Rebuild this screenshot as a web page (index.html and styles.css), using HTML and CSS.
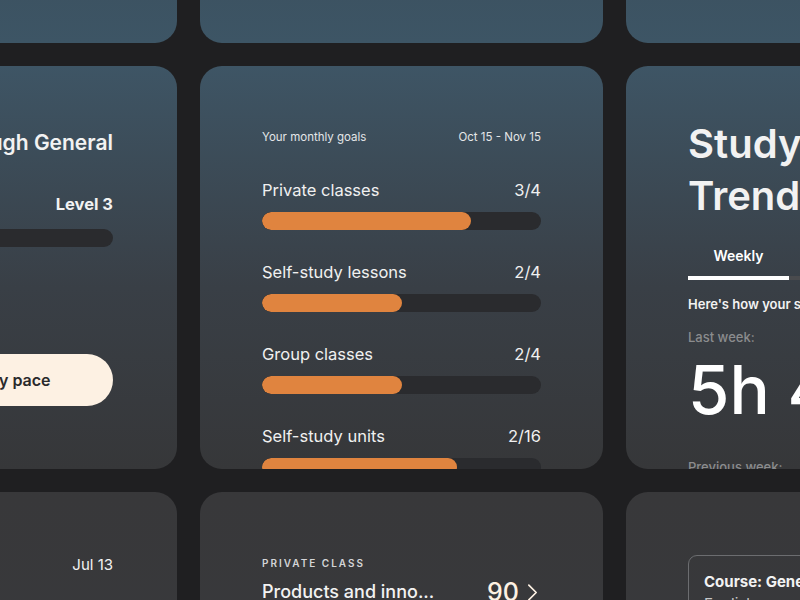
FILE: index.html
```html
<!DOCTYPE html>
<html lang="en">
<head>
<meta charset="utf-8">
<title>Dashboard</title>
<link rel="stylesheet" href="styles.css">
</head>
<body>
<div class="board">
  <div class="card card-top"></div>
  <div class="card card-top"></div>
  <div class="card card-top"></div>

  <div class="card card-mid course">
    <div class="course-title">Breakthrough General</div>
    <div class="level">Level 3</div>
    <div class="track"><div class="fill" style="width: 20%"></div></div>
    <button class="pace-btn">Customize my pace</button>
  </div>

  <div class="card card-mid goals">
    <div class="goals-head">
      <span>Your monthly goals</span>
      <span>Oct 15 - Nov 15</span>
    </div>
    <div class="goal">
      <div class="goal-row"><span>Private classes</span><span>3/4</span></div>
      <div class="track"><div class="fill" style="width: 75%"></div></div>
    </div>
    <div class="goal">
      <div class="goal-row"><span>Self-study lessons</span><span>2/4</span></div>
      <div class="track"><div class="fill" style="width: 50%"></div></div>
    </div>
    <div class="goal">
      <div class="goal-row"><span>Group classes</span><span>2/4</span></div>
      <div class="track"><div class="fill" style="width: 50%"></div></div>
    </div>
    <div class="goal">
      <div class="goal-row"><span>Self-study units</span><span>2/16</span></div>
      <div class="track"><div class="fill" style="width: 70%"></div></div>
    </div>
  </div>

  <div class="card card-mid trend">
    <h1 class="trend-title">Study<br>Trend</h1>
    <div class="tabs">
      <div class="tab active">Weekly</div>
      <div class="tab">Monthly</div>
    </div>
    <div class="trend-intro">Here's how your study time compares</div>
    <div class="muted">Last week:</div>
    <div class="big">5h 40m</div>
    <div class="divider"></div>
    <div class="muted prev">Previous week:</div>
  </div>

  <div class="card card-low dates">
    <div class="date">Jul 13</div>
  </div>

  <div class="card card-low private">
    <div class="eyebrow">PRIVATE CLASS</div>
    <div class="class-row">
      <span class="class-name">Products and inno...</span>
      <span class="class-score">90
        <svg class="chev" viewBox="0 0 12 20" width="11" height="19"><path d="M2 2 L10 10 L2 18" fill="none" stroke="currentColor" stroke-width="1.8" stroke-linecap="round" stroke-linejoin="round"/></svg>
      </span>
    </div>
  </div>

  <div class="card card-low coursebox-card">
    <div class="coursebox">
      <div class="coursebox-title">Course: General</div>
      <div class="coursebox-sub">English</div>
    </div>
  </div>
</div>
</body>
</html>
```

FILE: styles.css
```css
* { box-sizing: border-box; }

html, body {
  margin: 0;
  padding: 0;
  height: 100%;
  overflow: hidden;
  background: #1f1f21;
  font-family: "Inter", "Noto Sans", sans-serif;
  color: #f2f2f2;
}

.board {
  display: grid;
  grid-template-columns: repeat(3, 403px);
  grid-auto-rows: 403px;
  gap: 23px;
  margin: -360px 0 0 -226px;
  width: 1255px;
}

.card {
  border-radius: 22px;
  padding: 63px 62px;
  overflow: hidden;
  display: flex;
  flex-direction: column;
}

.card-top { background: linear-gradient(180deg, #36383b 0%, #3b4f5d 70%, #3d5565 100%); }
.card-mid { background: linear-gradient(180deg, #3e5565 0%, #393f46 55%, #363739 100%); }
.card-low { background: linear-gradient(180deg, #38383a 0%, #38393c 50%, #3a4048 100%); }

/* shared progress bar */
.track {
  height: 18px;
  border-radius: 9px;
  background: #2a2b2e;
  overflow: hidden;
}
.fill {
  height: 100%;
  border-radius: 9px;
  background: #e0843f;
}

/* left course card */
.course { padding-right: 64px; }
.course .track .fill { background: transparent; }
.course-title {
  font-size: 21px;
  line-height: 28px;
  font-weight: 600;
  text-align: right;
  white-space: nowrap;
}
.level {
  margin-top: 36px;
  font-size: 16.5px;
  line-height: 22px;
  font-weight: 700;
  text-align: right;
}
.course .track { margin-top: 14px; }
.pace-btn {
  margin-top: 107px;
  height: 52px;
  border: none;
  border-radius: 26px;
  background: #fdf1e3;
  color: #2a2a2c;
  font-family: inherit;
  font-size: 16px;
  font-weight: 600;
}

/* goals card */
.goals-head {
  display: flex;
  justify-content: space-between;
  font-size: 11.5px;
  line-height: 16px;
  color: #e4e6e8;
}
.goals-head + .goal { margin-top: 34px; }
.goal + .goal { margin-top: 31px; }
.goal-row {
  display: flex;
  justify-content: space-between;
  font-size: 16.5px;
  line-height: 22px;
  color: #f0f0f0;
}
.goal .track { margin-top: 11px; }

/* trend card */
.trend-title {
  margin: -11px 0 0;
  font-size: 40px;
  line-height: 52px;
  font-weight: 600;
  white-space: nowrap;
}
.tabs {
  margin-top: 24px;
  display: flex;
  border-bottom: 4px solid #4a4b4e;
}
.tab {
  width: 101px;
  flex: none;
  text-align: center;
  font-size: 14px;
  line-height: 20px;
  font-weight: 600;
  padding-bottom: 10px;
  margin-bottom: -4px;
  border-bottom: 4px solid transparent;
  color: #9a9a9c;
}
.tab.active { color: #ffffff; border-bottom-color: #ffffff; }
.trend-intro {
  margin-top: 15px;
  font-size: 13px;
  line-height: 18px;
  font-weight: 600;
  white-space: nowrap;
}
.muted {
  margin-top: 15px;
  font-size: 13px;
  line-height: 18px;
  color: #8b8c8e;
  font-weight: 500;
  white-space: nowrap;
}
.big {
  margin-top: 4px;
  font-size: 67px;
  line-height: 80px;
  font-weight: 500;
  white-space: nowrap;
  color: #ffffff;
}
.divider {
  margin-top: 8px;
  height: 2px;
  background: #4a4b4e;
}
.muted.prev { margin-top: 20px; }

/* bottom row */
.dates { padding-right: 64px; }
.date {
  margin-top: 0;
  text-align: right;
  font-size: 15px;
  line-height: 20px;
}
.eyebrow {
  margin-top: 1px;
  font-size: 10px;
  line-height: 14px;
  letter-spacing: 2px;
  font-weight: 600;
  color: #d4d5d7;
}
.class-row {
  margin-top: 8px;
  display: flex;
  justify-content: space-between;
  align-items: center;
}
.class-name {
  font-size: 18px;
  line-height: 24px;
  font-weight: 500;
}
.class-score {
  display: flex;
  align-items: center;
  gap: 8px;
  margin-right: 3px;
  font-size: 25px;
  line-height: 28px;
  font-weight: 500;
  color: #fdf1e3;
}
.coursebox {
  border: 1.5px solid #6c6d70;
  border-radius: 9px;
  padding: 15px 15px;
}
.coursebox-title {
  font-size: 15px;
  line-height: 22px;
  font-weight: 700;
  white-space: nowrap;
}
.coursebox-sub {
  font-size: 15px;
  line-height: 22px;
  color: #c8c8ca;
}
```
